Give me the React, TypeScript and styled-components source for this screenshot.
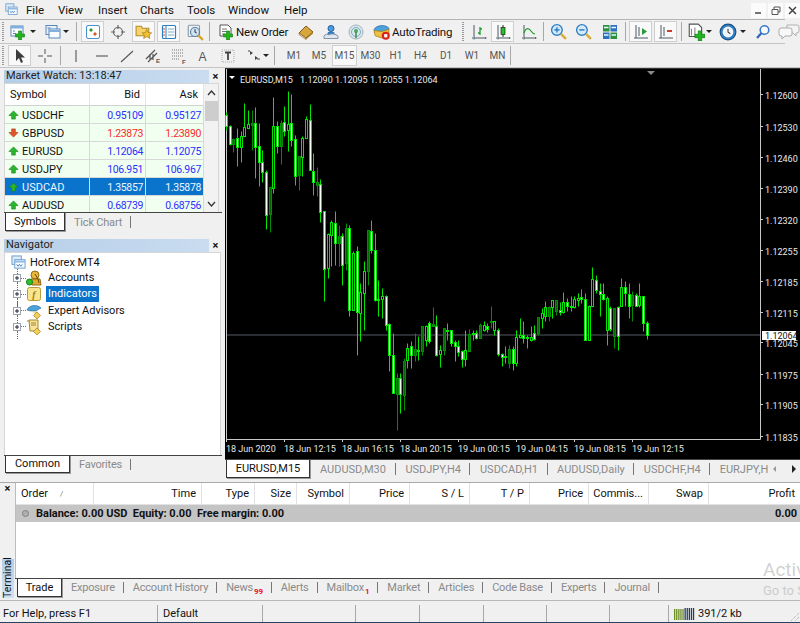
import React from "react";
import styled, { createGlobalStyle } from "styled-components";

const GlobalStyle = createGlobalStyle`
  html, body { margin: 0; padding: 0; background: #f0f0f0; }
  body { font-family: Roboto, "Noto Sans", sans-serif; font-size: 11px; color: #111; }
  * { box-sizing: border-box; }
`;

const Frame = styled.div`
  width: 800px;
  height: 623px;
  display: flex;
  flex-direction: column;
  overflow: hidden;
  position: relative;
  background: #f0f0f0;
`;

/* menu */
const MenuBar = styled.div`
  height: 20px;
  display: flex;
  align-items: center;
  padding-left: 5px;
  border-bottom: 1px solid #b4b4b4;
  width: 785px;
  flex: none;
`;
const MenuItem = styled.span<{ $w: number }>`
  width: ${(p) => p.$w}px;
  font-size: 11.5px;
  display: flex;
  align-items: center;
`;
const WindowButtons = styled.div`
  position: absolute;
  top: 3px;
  right: 0;
  display: flex;
  gap: 2px;
`;
const WindowButton = styled.div`
  width: 15px;
  height: 15px;
  background: #fbfbfb;
  display: flex;
  align-items: center;
  justify-content: center;
`;

/* toolbars */
const ToolRow = styled.div<{ $w?: number }>`
  height: 24px;
  flex: none;
  display: flex;
  align-items: center;
  padding-left: 2px;
  border-bottom: 1px solid #c4c4c4;
  width: ${(p) => (p.$w ? `${p.$w}px` : "100%")};
`;
const Grip = styled.div<{ $ml?: number }>`
  width: 2px;
  height: 19px;
  margin: 0 5px 0 ${(p) => p.$ml ?? 0}px;
  background: repeating-linear-gradient(180deg, #9a9a9a 0 1px, transparent 1px 2px);
  flex: none;
`;
const Sep = styled.div<{ $l?: number; $r?: number }>`
  width: 1px;
  height: 19px;
  background: #a8a8a8;
  flex: none;
  margin: 0 ${(p) => p.$r ?? 4}px 0 ${(p) => p.$l ?? 4}px;
`;
const ToolButton = styled.div<{ $w?: number; $on?: boolean; $ml?: number }>`
  width: ${(p) => p.$w ?? 23}px;
  height: 21px;
  flex: none;
  display: flex;
  align-items: center;
  justify-content: center;
  margin-left: ${(p) => p.$ml ?? 0}px;
  font-size: 10px;
  color: #555;
  background: ${(p) => (p.$on ? "#f9f9f9" : "transparent")};
  border: 1px solid ${(p) => (p.$on ? "#cfcfcf" : "transparent")};
`;
const ToolLabel = styled.span<{ $w: number; $ml?: number }>`
  width: ${(p) => p.$w}px;
  margin-left: ${(p) => p.$ml ?? 0}px;
  flex: none;
  font-size: 11.5px;
  letter-spacing: -0.2px;
  white-space: nowrap;
`;
const Caret = styled.i<{ $ml?: number }>`
  width: 0;
  height: 0;
  flex: none;
  margin-left: ${(p) => p.$ml ?? 0}px;
  border-left: 3px solid transparent;
  border-right: 3px solid transparent;
  border-top: 3px solid #222;
`;

/* workspace */
const Workspace = styled.div`
  height: 412px;
  flex: none;
  display: flex;
`;
const LeftDock = styled.div`
  width: 222px;
  flex: none;
  padding: 2px 0 0 4px;
  display: flex;
  flex-direction: column;
`;
const DockTitle = styled.div`
  height: 13px;
  flex: none;
  display: flex;
  align-items: center;
`;
const TitleText = styled.div`
  width: 205px;
  height: 13px;
  line-height: 12px;
  padding-left: 2px;
  font-size: 11px;
  color: #222;
  background: linear-gradient(90deg, #b5cee8, #c9dcf0);
`;
const CloseMark = styled.span`
  width: 13px;
  text-align: center;
  font-size: 11px;
  font-weight: 700;
  line-height: 12px;
`;
const WatchBox = styled.div`
  height: 129px;
  width: 215px;
  flex: none;
  display: flex;
  overflow: hidden;
  background: #fff;
  border: 1px solid #d6d6d6;
  border-bottom: none;
`;
const WatchTable = styled.div`
  width: 199px;
  flex: none;
  display: grid;
  grid-template-columns: 85px 56px 58px;
  grid-auto-rows: 18px;
  align-content: start;
`;
const HeadCell = styled.div<{ $right?: boolean }>`
  height: 22px;
  margin-bottom: -4px;
  display: flex;
  align-items: center;
  justify-content: ${(p) => (p.$right ? "flex-end" : "flex-start")};
  padding: 0 5px;
  background: #fff;
  border-right: 1px solid #e4e4e4;
  border-bottom: 1px solid #d0d0d0;
  position: relative;
`;
const RowCell = styled.div<{ $sel?: boolean; $color?: string; $right?: boolean }>`
  display: flex;
  align-items: center;
  gap: 3px;
  justify-content: ${(p) => (p.$right ? "flex-end" : "flex-start")};
  padding: 1px ${(p) => (p.$right ? 2 : 3)}px 0;
  font-size: ${(p) => (p.$right ? 10.5 : 11)}px;
  letter-spacing: ${(p) => (p.$right ? -0.35 : 0)}px;
  background: ${(p) => (p.$sel ? "#0a74cc" : "#f0fff0")};
  color: ${(p) => (p.$sel ? "#eef6ff" : p.$color ?? "#111")};
  border-right: 1px solid ${(p) => (p.$sel ? "#cfe3f5" : "#d8d8d8")};
  border-bottom: 1px solid #d8d8d8;
  margin-top: 4px;
  margin-bottom: -4px;
`;
const Scrollbar = styled.div`
  flex: 1;
  display: flex;
  flex-direction: column;
  align-items: center;
  background: #f2f2f2;
`;
const ScrollArrow = styled.div`
  height: 17px;
  display: flex;
  align-items: center;
  justify-content: center;
  flex: none;
`;
const ScrollThumb = styled.div`
  width: 13px;
  height: 20px;
  flex: none;
  background: #cdcdcd;
`;
const ScrollGap = styled.div`
  flex: 1;
`;

const TabStrip = styled.div<{ $h: number; $pl?: number }>`
  height: ${(p) => p.$h}px;
  flex: none;
  display: flex;
  align-items: flex-start;
  padding-left: ${(p) => p.$pl ?? 1}px;
  border-top: 1px solid #444;
  white-space: nowrap;
  overflow: hidden;
  position: relative;
`;
const ActiveTab = styled.div<{ $w: number; $h: number }>`
  width: ${(p) => p.$w}px;
  height: ${(p) => p.$h}px;
  flex: none;
  margin-top: -1px;
  background: #fff;
  color: #111;
  display: flex;
  align-items: center;
  justify-content: center;
  border-left: 1px solid #333;
  border-right: 1px solid #333;
  border-bottom: 1px solid #333;
  box-shadow: 1px 1px 0 #999;
`;
const IdleTab = styled.div<{ $h: number; $pad?: number; $track?: number }>`
  height: ${(p) => p.$h}px;
  flex: none;
  display: flex;
  align-items: center;
  padding: 0 ${(p) => p.$pad ?? 9}px;
  letter-spacing: ${(p) => p.$track ?? -0.2}px;
  color: #8a8a8a;
  position: relative;
  &::after {
    content: "";
    position: absolute;
    right: 0;
    top: 3px;
    bottom: 3px;
    width: 1px;
    background: #777;
  }
`;
const Badge = styled.span`
  color: #e8141c;
  font-size: 8px;
  font-weight: 700;
  margin-left: 1px;
  align-self: flex-end;
  line-height: 9px;
`;
const DockGap = styled.div`
  height: 7px;
  flex: none;
`;
const TreeBox = styled.div`
  width: 217px;
  height: 203px;
  flex: none;
  background: #fff;
  border: 1px solid #d6d6d6;
  border-bottom: none;
  padding-top: 1px;
`;
const TreeRow = styled.div<{ $indent?: boolean }>`
  height: 16.2px;
  display: flex;
  align-items: center;
  padding-left: ${(p) => (p.$indent ? 8 : 6)}px;
  position: relative;
`;
const Twist = styled.div`
  width: 8px;
  height: 8px;
  flex: none;
  border: 1px solid #9aa5b1;
  background: #fff;
  position: relative;
  &::before {
    content: "";
    position: absolute;
    left: 3px;
    top: -6px;
    height: 5px;
    border-left: 1px dotted #666;
  }
  &::after {
    content: "";
    position: absolute;
    left: 3px;
    bottom: -9px;
    height: 8px;
    border-left: 1px dotted #666;
  }
`;
const TwistPlus = styled.svg`
  display: block;
  position: absolute;
  left: 0;
  top: 0;
`;
const TreeDash = styled.div`
  width: 5px;
  flex: none;
  border-top: 1px dotted #777;
`;
const Leaf = styled.span<{ $sel?: boolean }>`
  margin-left: 4px;
  padding: 0 2px;
  height: 16px;
  line-height: 15px;
  background: ${(p) => (p.$sel ? "#0a74cc" : "transparent")};
  color: ${(p) => (p.$sel ? "#fff" : "#111")};
`;
const TreeRoot = styled.span`
  margin-left: 4px;
`;

/* chart */
const ChartDock = styled.div`
  flex: 1;
  min-width: 0;
  display: flex;
  flex-direction: column;
  padding-left: 3px;
`;
const ChartArea = styled.div`
  height: 391px;
  flex: none;
  background: #000;
  border-top: 1px solid #333;
`;
const ChartSvg = styled.svg`
  display: block;
  width: 575px;
  height: 390px;
`;
const TabArrows = styled.div`
  position: absolute;
  right: 0;
  top: 0;
  height: 18px;
  width: 32px;
  background: #f0f0f0;
  display: flex;
  align-items: center;
  justify-content: space-between;
  padding: 0 4px;
`;

/* terminal */
const Terminal = styled.div`
  height: 118px;
  flex: none;
  display: flex;
  border-top: 1px solid #aaa;
  margin-top: 2px;
`;
const TerminalSide = styled.div`
  width: 15px;
  flex: none;
  display: flex;
  flex-direction: column;
  align-items: center;
  justify-content: space-between;
  padding: 0 0 2px;
`;
const SideTitle = styled.div`
  writing-mode: vertical-rl;
  transform: rotate(180deg);
  width: 12px;
  height: 39px;
  line-height: 11px;
  font-size: 10.5px;
  background: linear-gradient(0deg, #b5cee8, #d3e2f2);
`;
const TerminalMain = styled.div`
  flex: 1;
  min-width: 0;
  display: flex;
  flex-direction: column;
`;
const OrderGrid = styled.div`
  display: grid;
  grid-template-columns: 78px 108px 53px 42px 53px 60px 60px 60px 59px 60px 60px 92px;
  height: 22px;
  flex: none;
  background: #fff;
  border-left: 1px solid #bbb;
`;
const OrderHead = styled.div<{ $left?: boolean }>`
  display: flex;
  align-items: center;
  justify-content: ${(p) => (p.$left ? "flex-start" : "flex-end")};
  padding: 0 5px;
  border-right: 1px solid #e2e2e2;
  border-bottom: 1px solid #e2e2e2;
`;
const SortMark = styled.span`
  margin-left: 12px;
  font-size: 8px;
  color: #777;
`;
const BalanceRow = styled.div`
  height: 17px;
  flex: none;
  display: flex;
  align-items: center;
  background: #c4c4c4;
  font-weight: 700;
  padding: 0 3px 0 6px;
  border-left: 1px solid #bbb;
`;
const BalanceDot = styled.span`
  width: 7px;
  height: 7px;
  border-radius: 50%;
  border: 1px solid #808080;
  background: #b0b0b0;
  margin-right: 7px;
`;
const BalanceProfit = styled.span`
  margin-left: auto;
`;
const OrderBlank = styled.div`
  flex: 1;
  background: #fff;
  border-left: 1px solid #bbb;
`;

const StatusBar = styled.div`
  flex: 1;
  display: flex;
  align-items: center;
  padding-top: 4px;
  border-top: 1px solid #b8b8b8;
  border-bottom: 1px solid #23465a;
  position: relative;
`;
const StatusCell = styled.div<{ $w: number; $pl?: number }>`
  width: ${(p) => p.$w}px;
  height: 17px;
  flex: none;
  display: flex;
  align-items: center;
  padding-left: ${(p) => p.$pl ?? 5}px;
  border-right: 1px solid #a8a8a8;
  white-space: nowrap;
`;
const StatusEnd = styled.div`
  flex: 1;
  display: flex;
  align-items: center;
  gap: 3px;
  padding-left: 5px;
`;
const ResizeGrip = styled.svg`
  position: absolute;
  right: 0;
  bottom: 0;
`;
const Watermark = styled.div`
  position: absolute;
  left: 763px;
  top: 559px;
  color: rgba(170, 170, 170, 0.55);
  font-size: 19px;
  line-height: 22px;
  white-space: nowrap;
  pointer-events: none;
`;
const WatermarkSub = styled.div`
  font-size: 13px;
  line-height: 20px;
`;

/* icons */
const Ico: React.FC<{ s?: number; children: React.ReactNode }> = ({ s = 16, children }) => (
  <svg width={s} height={s} viewBox="0 0 16 16" fill="none">
    {children}
  </svg>
);
const Plus = () => (
  <path
    d="M8.5 7h3v3h3v3h-3v3h-3v-3h-3v-3h3z"
    fill="#22b51f"
    stroke="#0d7a10"
    strokeWidth=".6"
  />
);
const NewChartIcon = () => (
  <Ico>
    <rect x="1" y="2" width="12" height="10" fill="#fff" stroke="#5b87b8" />
    <rect x="1" y="2" width="12" height="2.5" fill="#7fb0e0" />
    <path d="M3 7h2M3 9.5h3" stroke="#5b87b8" />
    <Plus />
  </Ico>
);
const ProfileIcon = () => (
  <Ico>
    <rect x="1" y="1.500" width="11" height="9" fill="#e8f0fa" stroke="#5b87b8" />
    <rect x="4" y="5" width="11" height="9" fill="#f8fbff" stroke="#5b87b8" />
    <path d="M4 7h11" stroke="#7fb0e0" strokeWidth="2" />
    <path d="M2.500 4h3" stroke="#5b87b8" />
  </Ico>
);
const WatchIcon = () => (
  <Ico>
    <rect x="1.500" y="1.500" width="13" height="13" rx="1.500" fill="#fff" stroke="#4a8fd0" />
    <path d="M6 4l2 2-2 2-2-2z" fill="#2c9a3c" />
    <path d="M10 8l2 2-2 2-2-2z" fill="#d9532b" />
  </Ico>
);
const TargetIcon = () => (
  <Ico>
    <circle cx="8" cy="8" r="4.500" stroke="#666" strokeWidth="1.200" />
    <path d="M8 1v4M8 11v4M1 8h4M11 8h4" stroke="#666" strokeWidth="1.200" />
  </Ico>
);
const FolderStarIcon = () => (
  <Ico s={17}>
    <path d="M1 3h5l1 2h6v7H1z" fill="#f5d36a" stroke="#b58a26" />
    <path d="M11 6l1.400 3 3.200.3-2.400 2.100.8 3.100-3-1.700-2.800 1.700.7-3.100L6.600 9.300 9.800 9z" fill="#f2c230" stroke="#a87c14" strokeWidth=".7" />
  </Ico>
);
const TerminalIcon = () => (
  <Ico>
    <rect x="1.500" y="1.500" width="13" height="13" rx="1" fill="#fff" stroke="#2f7fc4" strokeWidth="1.200" />
    <path d="M5 2v12" stroke="#2f7fc4" />
    <path d="M2 5h2M2 8h2M2 11h2" stroke="#d04a3a" />
    <path d="M7 5h6M7 8h6M7 11h6" stroke="#7da7cc" />
  </Ico>
);
const TesterIcon = () => (
  <Ico s={18}>
    <rect x="2" y="2" width="10" height="10" rx="1" fill="#eef2f6" stroke="#8a9aa8" />
    <circle cx="8" cy="8" r="4" fill="#cfe3f3" stroke="#5b7f9e" />
    <path d="M8 5.500V8l1.500 1" stroke="#444" />
    <path d="M11 11l4 4" stroke="#d2a52a" strokeWidth="2" />
  </Ico>
);
const OrderIcon = () => (
  <Ico>
    <path d="M2 1h8l3 3v8H2z" fill="#fff" stroke="#555" />
    <path d="M4 5h5M4 7.500h6M4 10h3" stroke="#777" />
    <Plus />
  </Ico>
);
const BookIcon = () => (
  <Ico>
    <path d="M1 9l7-7 7 6-7 6z" fill="#d9a63c" stroke="#80581a" />
    <path d="M1 9l7 5v1.500L1 10.500z" fill="#f5e5b8" stroke="#80581a" strokeWidth=".6" />
    <path d="M15 8l-7 6v1.500l7-6z" fill="#a67a26" />
  </Ico>
);
const PeopleIcon = () => (
  <Ico>
    <circle cx="8" cy="4.500" r="3" fill="#4f9ae0" stroke="#1f5f9e" />
    <path d="M5 8h6l1 3H4z" fill="#2f7fc4" />
    <path d="M1 12c1-2 4-2 5-1 2-2 7-1 9 1v2.500H1z" fill="#dfe6ee" stroke="#8394a8" />
  </Ico>
);
const SignalIcon = () => (
  <Ico>
    <circle cx="8" cy="8" r="7" fill="#dfe8ec" stroke="#9db0bb" />
    <circle cx="8" cy="8" r="4.500" stroke="#6ea8c8" />
    <circle cx="8" cy="7" r="2" fill="#48a860" />
    <path d="M8 8v6" stroke="#3a8f50" strokeWidth="1.500" />
  </Ico>
);
const AutoIcon = () => (
  <Ico s={17}>
    <path d="M1 6c2-4 11-5 14-1l-1 5H2z" fill="#4da2dc" stroke="#266a9e" strokeWidth=".7" />
    <path d="M1 7l7 1 7-2v5l-7 3-6-2z" fill="#f0c040" stroke="#a87c14" strokeWidth=".7" />
    <circle cx="12" cy="12" r="3.800" fill="#d8261c" />
    <rect x="10.500" y="10.500" width="3" height="3" fill="#fff" />
  </Ico>
);
const BarChartIcon: React.FC<{ mode: "bar" | "candle" | "line" }> = ({ mode }) => (
  <Ico>
    <path d="M3 1v13M3 14h12" stroke="#4a5a66" />
    <path d="M1 14h1M3 14v1.500" stroke="#4a5a66" />
    <path d="M14 13l2 1-2 1z" fill="#4a5a66" />
    {mode === "bar" && <path d="M9 3v8M9 5h2M7 9h2" stroke="#1f9a2a" strokeWidth="1.300" />}
    {mode === "candle" && (
      <>
        <path d="M8 1v12" stroke="#222" />
        <rect x="6" y="3.500" width="4" height="7" fill="#22c22a" stroke="#222" strokeWidth=".7" />
      </>
    )}
    {mode === "line" && <path d="M3 9c2-6 5-5 7-2s3 3 4 3" stroke="#1f9a2a" strokeWidth="1.200" />}
  </Ico>
);
const ZoomIcon: React.FC<{ plus?: boolean }> = ({ plus }) => (
  <Ico s={17}>
    <circle cx="6.500" cy="6.500" r="5" fill="#d5eafa" stroke="#2f7fc4" strokeWidth="1.300" />
    <path d="M4 6.500h5" stroke="#2f7fc4" strokeWidth="1.400" />
    {plus && <path d="M6.500 4v5" stroke="#2f7fc4" strokeWidth="1.400" />}
    <path d="M10.500 10.500l4.500 4.500" stroke="#d6ad3a" strokeWidth="2.400" />
  </Ico>
);
const TileIcon = () => (
  <Ico>
    <rect x="1" y="1" width="6.500" height="6.500" fill="#2e8f3e" />
    <rect x="8.500" y="1" width="6.500" height="6.500" fill="#2f6fc0" />
    <rect x="1" y="8.500" width="6.500" height="6.500" fill="#2f6fc0" />
    <rect x="8.500" y="8.500" width="6.500" height="6.500" fill="#2e8f3e" />
    <path d="M2 3.500h4.500M9.500 3.500h4.500M2 11h4.500M9.500 11h4.500" stroke="#dff" strokeWidth="1.500" />
  </Ico>
);
const ShiftIcon: React.FC<{ color: string; pin?: boolean }> = ({ color, pin }) => (
  <Ico>
    <path d="M3 1v13M1 14h14" stroke="#4a5a66" />
    <path d="M6 3v9" stroke="#4a5a66" />
    {pin ? <path d="M9 7h5" stroke={color} strokeWidth="2" /> : <path d="M9 4l5 3.500-5 3.500z" fill={color} />}
  </Ico>
);
const TemplateIcon = () => (
  <Ico s={18}>
    <path d="M2 1h8l3 3v8H2z" fill="#fff" stroke="#555" />
    <path d="M4 5v6M7 4v7" stroke="#888" />
    <path d="M10 7h3v3h3v3h-3v3h-3v-3H7v-3h3z" fill="#22b51f" stroke="#0d7a10" strokeWidth=".6" />
  </Ico>
);
const ClockIcon = () => (
  <Ico s={18}>
    <circle cx="8" cy="8" r="7" fill="#2f7fc4" stroke="#1a4f80" />
    <circle cx="8" cy="8" r="4.800" fill="#f2f6fa" />
    <path d="M8 5v3l2 1.500" stroke="#444" />
  </Ico>
);
const SearchIcon = () => (
  <Ico>
    <circle cx="9.500" cy="6" r="4.300" stroke="#3d78c8" strokeWidth="1.600" fill="#f6faff" />
    <path d="M6.500 9l-4.500 5" stroke="#2f64b4" strokeWidth="2.200" />
  </Ico>
);
const ChatIcon = () => (
  <svg width="22" height="16" viewBox="0 0 22 16" fill="none">
    <path d="M9 1h10a2 2 0 012 2v4a2 2 0 01-2 2h-1v3l-3-3H9z" fill="#f4f4f4" stroke="#b0b0b0" />
    <path d="M3 4h9a2 2 0 012 2v4a2 2 0 01-2 2H7l-3 3v-3H3a2 2 0 01-2-2V6a2 2 0 012-2z" fill="#f8f8f8" stroke="#aaa" />
  </svg>
);
const ArrowTool = () => (
  <Ico>
    <path d="M4 1v12l3-3 2 5 2-1-2-4.500h4z" fill="#3c3c3c" />
  </Ico>
);
const CrossTool = () => (
  <Ico>
    <path d="M8 1v5M8 10v5M1 8h5M10 8h5" stroke="#555" />
  </Ico>
);
const LineTool: React.FC<{ d: string }> = ({ d }) => (
  <Ico>
    <path d={d} stroke="#555" strokeWidth="1.100" />
  </Ico>
);
const ChannelTool = () => (
  <Ico>
    <path d="M1 11l9-9M3 14l9-9M5 12V6M8 12V6" stroke="#555" strokeWidth="1.200" />
    <text x="11" y="15" fontSize="6" fontWeight="700" fill="#555" fontFamily="Liberation Sans, sans-serif">E</text>
  </Ico>
);
const FiboTool = () => (
  <Ico>
    <path d="M1 2h12M1 5h12M1 8h12M1 11h8" stroke="#777" strokeDasharray="1 1" />
    <text x="11" y="15.500" fontSize="6" fontWeight="700" fill="#555" fontFamily="Liberation Sans, sans-serif">F</text>
  </Ico>
);
const TextTool = () => (
  <Ico>
    <rect x="2" y="2" width="12" height="12" stroke="#aaa" strokeDasharray="1 1" />
    <path d="M5 4.500h6M8 4.500V12" stroke="#444" strokeWidth="1.800" />
  </Ico>
);
const MarksTool = () => (
  <Ico>
    <path d="M4 3l3 2-3 2zM9 8l3 2-3 2z" fill="#444" />
    <path d="M2 3h2M11 11h3" stroke="#444" />
  </Ico>
);
const UpArrow = () => (
  <svg width="11" height="10" viewBox="0 0 12 11">
    <path d="M6 1l5 5H8v4H4V6H1z" fill="#2bb52e" stroke="#17801e" strokeWidth=".7" />
  </svg>
);
const DownArrow = () => (
  <svg width="11" height="10" viewBox="0 0 12 11">
    <path d="M6 10l5-5H8V1H4v4H1z" fill="#e2572a" stroke="#a83a18" strokeWidth=".7" />
  </svg>
);
const ServerIcon: React.FC<{ s?: number }> = ({ s = 15 }) => (
  <Ico s={s}>
    <rect x="1" y="1" width="10" height="9" fill="#dcebf8" stroke="#6a9cc8" />
    <rect x="4" y="5" width="11" height="9" fill="#f6fbff" stroke="#6a9cc8" />
    <path d="M4 7h11" stroke="#8cbbe4" strokeWidth="2" />
    <path d="M6 10l1.500 2L9 10l1.500 2 1.500-2" stroke="#4a7fb5" />
  </Ico>
);
const AccountsIcon = () => (
  <Ico>
    <circle cx="9" cy="5" r="4" fill="#e9b83a" stroke="#8f6a14" />
    <path d="M5 9h9l1 6H6z" fill="#e3a92e" stroke="#8f6a14" />
    <circle cx="3.500" cy="12" r="3" fill="#2ec22e" stroke="#148214" />
    <path d="M9 4l3 5 1 4" stroke="#6a4d0e" />
  </Ico>
);
const IndicatorIcon = () => (
  <Ico>
    <rect x="1.500" y="1.500" width="13" height="13" rx="2" fill="#f9e58e" stroke="#b89a38" />
    <text x="8" y="12" textAnchor="middle" fontSize="10" fontStyle="italic" fontWeight="700" fill="#a67c14" fontFamily="Liberation Serif, serif">f</text>
  </Ico>
);
const ExpertIcon = () => (
  <Ico>
    <path d="M1 7c2-5 10-6 14-2-3 1-4 3-6 3S3 8 1 7z" fill="#4da2dc" stroke="#266a9e" strokeWidth=".7" />
    <path d="M4 8l5 1 3-1-2 3z" fill="#f0d680" />
    <path d="M11 9l3.500 3.500L11 16l-3.500-3.500z" fill="#f2cf5c" stroke="#a87c14" strokeWidth=".7" />
  </Ico>
);
const ScriptIcon = () => (
  <Ico>
    <path d="M3 1h9v11H4z" fill="#f6e29a" stroke="#a8862a" />
    <path d="M1 2h3M5 4h5M5 6h5" stroke="#a8862a" />
    <path d="M11 9l3.500 3.500L11 16l-3.500-3.500z" fill="#f2cf5c" stroke="#a87c14" strokeWidth=".7" />
  </Ico>
);
const NetBars = () => (
  <svg width="21" height="12" viewBox="0 0 21 12">
    {Array.from({ length: 10 }).map((_, i) => (
      <rect key={i} x={i * 2.100} y={i < 5 ? 1 : 0} width="1.300" height="12" fill={i < 5 ? "#6b8e23" : "#24405a"} />
    ))}
  </svg>
);

/* candle data, traced in 3x units from the chart's corner */
type Kind = "w" | "h" | "d";
type Bar = [number, number, number, number, Kind];
const barsA: Bar[] = [
  [128, 182, 135, 170, "w"], [165, 225, 170, 222, "w"], [205, 248, 207, 222, "d"], [175, 288, 205, 232, "w"],
  [185, 278, 200, 232, "h"], [100, 200, 173, 200, "h"], [120, 175, 163, 175, "h"], [122, 240, 160, 165, "d"],
  [112, 325, 160, 232, "w"], [160, 348, 228, 278, "w"], [240, 338, 278, 308, "w"], [300, 478, 308, 437, "w"],
  [350, 486, 352, 434, "d"], [82, 370, 168, 356, "h"], [155, 250, 170, 228, "w"], [150, 284, 160, 228, "d"],
  [108, 200, 157, 183, "w"], [65, 245, 162, 182, "h"], [72, 230, 160, 212, "w"], [195, 345, 208, 318, "w"],
  [260, 362, 258, 315, "d"], [198, 320, 205, 262, "h"], [140, 205, 148, 204, "h"], [102, 300, 150, 302, "w"],
  [250, 375, 303, 338, "w"], [292, 380, 338, 345, "d"], [328, 458, 343, 427, "w"], [425, 695, 425, 598, "w"],
  [490, 625, 492, 595, "h"], [450, 590, 458, 495, "h"], [425, 585, 460, 520, "w"], [465, 590, 500, 520, "d"],
  [490, 645, 498, 585, "w"], [460, 600, 475, 580, "d"], [465, 740, 475, 720, "w"], [545, 720, 550, 720, "h"],
  [530, 855, 545, 728, "w"], [640, 815, 667, 730, "h"], [575, 780, 605, 670, "h"], [480, 645, 482, 605, "d"],
  [452, 550, 485, 540, "w"], [490, 695, 540, 690, "w"], [630, 740, 688, 692, "h"], [655, 745, 680, 688, "h"],
  [675, 780, 678, 765, "w"], [760, 905, 762, 855, "w"], [790, 970, 855, 970, "w"], [910, 1082, 925, 972, "d"],
  [910, 1030, 925, 973, "w"], [865, 1020, 873, 975, "d"],
];
const barsB: Bar[] = [
  [250, 325, 265, 300, "h"], [245, 325, 260, 285, "w"], [220, 305, 268, 285, "d"], [230, 300, 270, 272, "h"],
  [198, 285, 200, 275, "d"], [195, 260, 200, 240, "h"], [185, 250, 190, 245, "w"], [142, 200, 192, 198, "d"],
  [165, 290, 200, 285, "w"], [255, 322, 270, 283, "h"], [205, 285, 205, 270, "d"], [190, 240, 210, 215, "h"],
  [210, 260, 212, 250, "w"], [240, 305, 248, 260, "w"], [240, 290, 260, 278, "w"], [270, 322, 275, 297, "w"],
  [210, 320, 270, 297, "h"], [208, 275, 222, 275, "d"], [210, 240, 220, 222, "h"], [210, 238, 220, 235, "w"],
  [190, 236, 197, 235, "d"], [185, 215, 195, 210, "h"], [190, 218, 200, 208, "w"], [138, 205, 183, 188, "d"],
  [183, 225, 185, 212, "h"], [205, 290, 210, 282, "w"], [280, 318, 283, 292, "w"], [258, 310, 290, 292, "h"],
  [255, 325, 268, 310, "d"], [258, 332, 268, 310, "w"], [210, 318, 232, 310, "h"], [175, 235, 225, 232, "h"],
  [185, 250, 225, 235, "w"],
];
const barsC: Bar[] = [
  [255, 295, 262, 265, "h"], [230, 275, 262, 270, "h"], [225, 270, 250, 268, "w"], [203, 255, 203, 250, "d"],
  [175, 235, 190, 205, "h"], [153, 215, 172, 200, "h"], [170, 215, 172, 200, "d"], [150, 205, 152, 172, "h"],
  [150, 195, 152, 185, "d"], [158, 195, 180, 187, "w"], [128, 190, 158, 187, "h"], [145, 185, 158, 170, "w"],
  [140, 185, 168, 170, "h"], [140, 175, 148, 172, "h"], [130, 170, 145, 150, "h"], [118, 160, 142, 148, "w"],
  [130, 272, 148, 272, "w"], [165, 272, 170, 272, "h"], [52, 170, 88, 170, "h"], [75, 130, 90, 122, "w"],
  [100, 200, 125, 132, "w"], [100, 150, 133, 148, "w"], [140, 285, 145, 240, "h"], [170, 245, 175, 238, "w"],
  [175, 295, 175, 260, "d"], [170, 300, 172, 260, "w"], [85, 170, 113, 168, "h"], [95, 170, 113, 130, "w"],
  [100, 205, 133, 168, "w"], [125, 215, 137, 165, "d"], [130, 170, 137, 168, "w"], [100, 172, 140, 165, "h"],
  [140, 245, 140, 220, "w"], [215, 268, 220, 255, "w"],
];
const shift = (rows: Bar[], dy: number): Bar[] =>
  rows.map(([a, b, c, d, k]) => [a + dy, b + dy, c + dy, d + dy, k]);
const bars: Bar[] = [...barsA, ...shift(barsB, 570), ...shift(barsC, 540)];

const prices = [
  ["1.12600", 95], ["1.12530", 127], ["1.12460", 158], ["1.12390", 189], ["1.12320", 220], ["1.12255", 251],
  ["1.12185", 282], ["1.12115", 313], ["1.12045", 343], ["1.11975", 375], ["1.11905", 405], ["1.11835", 437],
] as const;
const times = [
  "18 Jun 2020", "18 Jun 12:15", "18 Jun 16:15", "18 Jun 20:15",
  "19 Jun 00:15", "19 Jun 04:15", "19 Jun 08:15", "19 Jun 12:15",
];

const snap = (v: number) => Math.floor(v) + 0.5;

const Chart = () => (
  <ChartSvg viewBox="0 0 575 390" fontFamily="Roboto, sans-serif" fontSize="9">
    <path d="M1.500 0V370.500H535.500V0" stroke="#c8c8c8" fill="none" />
    <path d="M2 266H535" stroke="#555b63" strokeWidth="1.200" />
    {bars.map(([hi, lo, top, bottom, kind], i) => {
      const x = snap((5 + i * 10.875) / 3);
      const y = (v: number) => snap(v / 3 + 1);
      const stroke = kind === "d" ? "#008f00" : "#00e600";
      const fill = kind === "w" ? "#f4fff4" : kind === "d" ? "#006a00" : "#000";
      return (
        <g key={i}>
          <path d={`M${x} ${y(hi)}V${y(lo)}`} stroke={stroke} />
          <rect x={x - 1} y={y(top)} width="2" height={Math.max(1, y(bottom) - y(top))} fill={fill} stroke={stroke} />
        </g>
      );
    })}
    <path d="M4 7h6l-3 3z" fill="#fff" />
    <text x="15" y="14" fill="#e8e8e8">EURUSD,M15</text>
    <text x="75" y="14" fill="#e8e8e8">1.12090 1.12095 1.12055 1.12064</text>
    <path d="M422 2h8l-4 4z" fill="#8a8a8a" />
    {prices.map(([label, y]) => (
      <g key={label}>
        <path d={`M535 ${y - 69.500}h3`} stroke="#ccc" />
        <text x="540" y={y - 65} fill="#e8e8e8">{label}</text>
      </g>
    ))}
    <rect x="537" y="262" width="34" height="9" fill="#fff" />
    <text x="540" y="270" fill="#111">1.12064</text>
    {times.map((t, i) => {
      const x = 1.500 + i * 58;
      return (
        <g key={t}>
          <path d={`M${x} 370v3`} stroke="#ccc" />
          <text x={x - 0.500} y="383" fill="#e8e8e8">{t}</text>
        </g>
      );
    })}
  </ChartSvg>
);

const quotes = [
  ["USDCHF", "0.95109", "0.95127", "up"],
  ["GBPUSD", "1.23873", "1.23890", "down"],
  ["EURUSD", "1.12064", "1.12075", "up"],
  ["USDJPY", "106.951", "106.967", "up"],
  ["USDCAD", "1.35857", "1.35878", "sel"],
  ["AUDUSD", "0.68739", "0.68756", "up"],
];

const chartTabs = ["AUDUSD,M30", "USDJPY,H4", "USDCAD,H1", "AUDUSD,Daily", "USDCHF,H4", "EURJPY,H"];
const terminalTabs: [string, string?][] = [
  ["Exposure"], ["Account History"], ["News", "99"], ["Alerts"], ["Mailbox", "1"], ["Market"], ["Articles"], ["Code Base"], ["Experts"], ["Journal"],
];
const orderCols = ["Time", "Type", "Size", "Symbol", "Price", "S / L", "T / P", "Price", "Commis...", "Swap", "Profit"];
const timeframes: [string, number, boolean?][] = [
  ["M1", 24], ["M5", 26], ["M15", 25, true], ["M30", 27], ["H1", 24],
  ["H4", 25], ["D1", 26], ["W1", 26], ["MN", 25],
];
const statusCells = [93, 64, 64, 63, 63, 59];

const TreePlus = () => (
  <TwistPlus width="6" height="6">
    <path d="M1 3h4M3 1v4" stroke="#223" />
  </TwistPlus>
);

const App = () => (
  <Frame>
    <GlobalStyle />
    <MenuBar>
      <MenuItem $w={21}>
        <ServerIcon s={13} />
      </MenuItem>
      <MenuItem $w={32}>File</MenuItem>
      <MenuItem $w={40}>View</MenuItem>
      <MenuItem $w={42}>Insert</MenuItem>
      <MenuItem $w={47}>Charts</MenuItem>
      <MenuItem $w={41}>Tools</MenuItem>
      <MenuItem $w={56}>Window</MenuItem>
      <MenuItem $w={40}>Help</MenuItem>
    </MenuBar>
    <WindowButtons>
      <WindowButton>
        <svg width="9" height="9"><path d="M1 7h6" stroke="#444" strokeWidth="1.500" /></svg>
      </WindowButton>
      <WindowButton>
        <svg width="10" height="10" fill="none"><path d="M3 3V1h6v5H7M1 3.500h6v5H1z" stroke="#555" /></svg>
      </WindowButton>
      <WindowButton>
        <svg width="9" height="9"><path d="M1 1l7 7M8 1L1 8" stroke="#444" strokeWidth="1.500" /></svg>
      </WindowButton>
    </WindowButtons>

    <ToolRow $w={785}>
      <Grip />
      <ToolButton $w={18}><NewChartIcon /></ToolButton>
      <Caret $ml={3} />
      <ToolButton $w={18} $ml={8}><ProfileIcon /></ToolButton>
      <Caret $ml={1} />
      <Sep $l={7} $r={4} />
      <ToolButton $on><WatchIcon /></ToolButton>
      <ToolButton $ml={2}><TargetIcon /></ToolButton>
      <ToolButton $on $ml={3}><FolderStarIcon /></ToolButton>
      <ToolButton $on $ml={2}><TerminalIcon /></ToolButton>
      <ToolButton $ml={3}><TesterIcon /></ToolButton>
      <Sep $l={3} $r={7} />
      <ToolButton $w={18}><OrderIcon /></ToolButton>
      <ToolLabel $w={58} $ml={1}>New Order</ToolLabel>
      <ToolButton><BookIcon /></ToolButton>
      <ToolButton $ml={2}><PeopleIcon /></ToolButton>
      <ToolButton $ml={2}><SignalIcon /></ToolButton>
      <ToolButton $w={20} $ml={4}><AutoIcon /></ToolButton>
      <ToolLabel $w={64} $ml={1}>AutoTrading</ToolLabel>
      <Grip $ml={6} />
      <ToolButton $w={19}><BarChartIcon mode="bar" /></ToolButton>
      <ToolButton $on $ml={3}><BarChartIcon mode="candle" /></ToolButton>
      <ToolButton $ml={3}><BarChartIcon mode="line" /></ToolButton>
      <Sep $l={3} $r={3} />
      <ToolButton><ZoomIcon plus /></ToolButton>
      <ToolButton $ml={2}><ZoomIcon /></ToolButton>
      <ToolButton $ml={3}><TileIcon /></ToolButton>
      <Sep $l={4} $r={3} />
      <ToolButton $on><ShiftIcon color="#2a9a3a" /></ToolButton>
      <ToolButton $on $ml={2}><ShiftIcon color="#d03a2a" pin /></ToolButton>
      <Sep $l={4} $r={4} />
      <ToolButton $w={20}><TemplateIcon /></ToolButton>
      <Caret />
      <ToolButton $w={20} $ml={6}><ClockIcon /></ToolButton>
      <Caret $ml={2} />
      <ToolButton $w={20} $ml={7}><SearchIcon /></ToolButton>
      <ToolButton $w={24} $ml={4}><ChatIcon /></ToolButton>
    </ToolRow>

    <ToolRow>
      <Grip />
      <ToolButton $on $ml={-1}><ArrowTool /></ToolButton>
      <ToolButton $ml={4} $w={20}><CrossTool /></ToolButton>
      <Sep $l={5} $r={3} />
      <ToolButton><LineTool d="M8 2v12" /></ToolButton>
      <ToolButton $ml={3}><LineTool d="M2 8h12" /></ToolButton>
      <ToolButton $ml={2}><LineTool d="M2 14L14 3" /></ToolButton>
      <ToolButton $ml={3}><ChannelTool /></ToolButton>
      <ToolButton $ml={3}><FiboTool /></ToolButton>
      <ToolButton $ml={1}>
        <svg width="13" height="13" viewBox="0 0 13 13"><text x="6.500" y="11.500" textAnchor="middle" fontSize="12" fill="#555" fontFamily="Liberation Sans, sans-serif">A</text></svg>
      </ToolButton>
      <ToolButton $ml={2}><TextTool /></ToolButton>
      <ToolButton $ml={5} $w={20}><MarksTool /></ToolButton>
      <Caret $ml={-1} />
      <Sep $l={5} $r={7} />
      {timeframes.map(([label, w, on]) => (
        <ToolButton key={label} $w={w} $on={on}>{label}</ToolButton>
      ))}
      <Sep $l={0} $r={0} />
    </ToolRow>

    <Workspace>
      <LeftDock>
        <DockTitle>
          <TitleText>Market Watch: 13:18:47</TitleText>
          <CloseMark>×</CloseMark>
        </DockTitle>
        <WatchBox>
          <WatchTable>
            <HeadCell>Symbol</HeadCell>
            <HeadCell $right>Bid</HeadCell>
            <HeadCell $right>Ask</HeadCell>
            {quotes.map(([sym, bid, ask, state]) => {
              const sel = state === "sel";
              const color = state === "down" ? "#fb2b2b" : "#2f2fff";
              return (
                <React.Fragment key={sym}>
                  <RowCell $sel={sel}>
                    {state === "down" ? <DownArrow /> : <UpArrow />}
                    {sym}
                  </RowCell>
                  <RowCell $sel={sel} $color={color} $right>{bid}</RowCell>
                  <RowCell $sel={sel} $color={color} $right>{ask}</RowCell>
                </React.Fragment>
              );
            })}
          </WatchTable>
          <Scrollbar>
            <ScrollArrow>
              <svg width="9" height="6"><path d="M1 5l3.500-4L8 5" stroke="#333" fill="none" strokeWidth="1.300" /></svg>
            </ScrollArrow>
            <ScrollThumb />
            <ScrollGap />
            <ScrollArrow>
              <svg width="9" height="6"><path d="M1 1l3.500 4L8 1" stroke="#333" fill="none" strokeWidth="1.300" /></svg>
            </ScrollArrow>
          </Scrollbar>
        </WatchBox>
        <TabStrip $h={20}>
          <ActiveTab $w={60} $h={19}>Symbols</ActiveTab>
          <IdleTab $h={18}>Tick Chart</IdleTab>
        </TabStrip>
        <DockGap />
        <DockTitle>
          <TitleText>Navigator</TitleText>
          <CloseMark>×</CloseMark>
        </DockTitle>
        <TreeBox>
          <TreeRow>
            <ServerIcon />
            <TreeRoot>HotForex MT4</TreeRoot>
          </TreeRow>
          <TreeRow $indent><Twist><TreePlus /></Twist><TreeDash /><AccountsIcon /><Leaf>Accounts</Leaf></TreeRow>
          <TreeRow $indent><Twist><TreePlus /></Twist><TreeDash /><IndicatorIcon /><Leaf $sel>Indicators</Leaf></TreeRow>
          <TreeRow $indent><Twist><TreePlus /></Twist><TreeDash /><ExpertIcon /><Leaf>Expert Advisors</Leaf></TreeRow>
          <TreeRow $indent><Twist><TreePlus /></Twist><TreeDash /><ScriptIcon /><Leaf>Scripts</Leaf></TreeRow>
        </TreeBox>
        <TabStrip $h={20}>
          <ActiveTab $w={65} $h={18}>Common</ActiveTab>
          <IdleTab $h={17}>Favorites</IdleTab>
        </TabStrip>
      </LeftDock>
      <ChartDock>
        <ChartArea>
          <Chart />
        </ChartArea>
        <TabStrip $h={21}>
          <ActiveTab $w={84} $h={19}>EURUSD,M15</ActiveTab>
          {chartTabs.map((t, i) => (
            <IdleTab key={t} $h={18} $track={0} $pad={i === 0 ? 10 : 9.500}>{t}</IdleTab>
          ))}
          <TabArrows>
            <svg width="5" height="8"><path d="M4 1v6L1 4z" fill="#999" /></svg>
            <svg width="5" height="8"><path d="M1 0v8l4-4z" fill="#222" /></svg>
          </TabArrows>
        </TabStrip>
      </ChartDock>
    </Workspace>

    <Terminal>
      <TerminalSide>
        <CloseMark>×</CloseMark>
        <SideTitle>Terminal</SideTitle>
      </TerminalSide>
      <TerminalMain>
        <OrderGrid>
          <OrderHead $left>Order<SortMark>/</SortMark></OrderHead>
          {orderCols.map((c, i) => (
            <OrderHead key={i}>{c}</OrderHead>
          ))}
        </OrderGrid>
        <BalanceRow>
          <BalanceDot />
          Balance: 0.00 USD&nbsp; Equity: 0.00&nbsp; Free margin: 0.00
          <BalanceProfit>0.00</BalanceProfit>
        </BalanceRow>
        <OrderBlank />
        <TabStrip $h={22} $pl={2}>
          <ActiveTab $w={45} $h={19}>Trade</ActiveTab>
          {terminalTabs.map(([t, badge]) => (
            <IdleTab key={t} $h={17}>
              {t}
              {badge && <Badge>{badge}</Badge>}
            </IdleTab>
          ))}
        </TabStrip>
      </TerminalMain>
    </Terminal>

    <StatusBar>
      <StatusCell $w={158} $pl={3}>For Help, press F1</StatusCell>
      <StatusCell $w={105}>Default</StatusCell>
      {statusCells.map((w, i) => (
        <StatusCell key={i} $w={w} />
      ))}
      <StatusEnd>
        <NetBars />
        391/2 kb
      </StatusEnd>
      <ResizeGrip width="11" height="11">
        <path d="M10 2L2 10M10 6L6 10" stroke="#a0a0a0" strokeDasharray="1 1" />
      </ResizeGrip>
    </StatusBar>

    <Watermark>
      Activate Windows
      <WatermarkSub>Go to Settings to activate Windows.</WatermarkSub>
    </Watermark>
  </Frame>
);

export default App;
